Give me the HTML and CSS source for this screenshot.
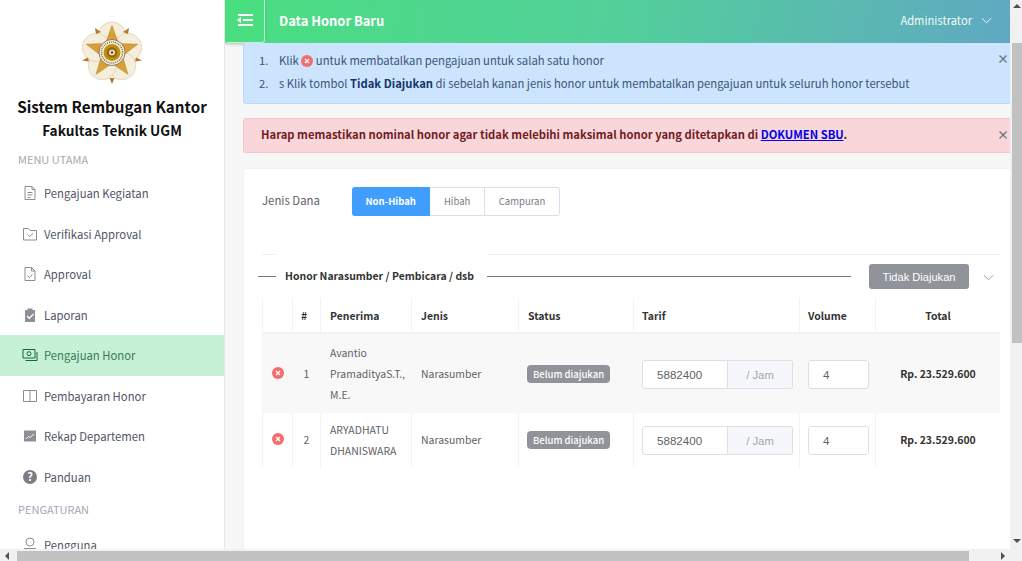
FILE: index.html
```html
<!DOCTYPE html>
<html lang="id">
<head>
    <meta charset="UTF-8">
    <meta name="viewport" content="width=device-width, initial-scale=1.0">
    <title>Data Honor Baru</title>
    <link rel="stylesheet" href="styles.css">
</head>
<body>

<div class="window">
    <div class="viewport">

        <aside class="sidebar">
            <svg class="logo" viewBox="0 0 60 64" width="60" height="64">
                <g fill="#f4eedb" stroke="#ddd2b2" stroke-width="0.8">
                    <circle cx="30" cy="15" r="14"/>
                    <circle cx="45.700" cy="26.400" r="14"/>
                    <circle cx="39.700" cy="44.800" r="14"/>
                    <circle cx="20.300" cy="44.800" r="14"/>
                    <circle cx="14.300" cy="26.400" r="14"/>
                </g>
                <g fill="#b9762a">
                    <path d="M47 7l-1 6-5-2z"/>
                    <path d="M13 7l1 6 5-2z"/>
                    <path d="M60 39.500l-6-3 -1 4z"/>
                    <path d="M0 39.500l6-3 1 4z"/>
                    <path d="M30 63l-2.500-6h5z"/>
                </g>
                <path d="M30 4.500l6.500 18.100 19.200 0.600-15.200 11.700 5.400 18.400-15.900-10.800-15.900 10.800 5.400-18.400-15.200-11.700 19.200-0.600z" fill="#d9a035" stroke="#b27c1e" stroke-width="0.500"/>
                <circle cx="30" cy="31.500" r="13" fill="#f6f1e4" stroke="#7b6136" stroke-width="0.800"/>
                <circle cx="30" cy="31.500" r="10.500" fill="none" stroke="#8a6a33" stroke-width="1.500" stroke-dasharray="1 1"/>
                <circle cx="30" cy="31.500" r="8.500" fill="#c2900f"/>
                <circle cx="30" cy="31.500" r="5.500" fill="#94700f"/>
                <circle cx="30" cy="31.500" r="2.800" fill="#f6f1e4"/>
                <circle cx="30" cy="31.500" r="1.200" fill="#6b2b2b"/>
            </svg>
            <div class="app-name">Sistem Rembugan Kantor</div>
            <div class="app-sub">Fakultas Teknik UGM</div>

            <div class="menu-label">MENU UTAMA</div>
            <a class="menu-item">
                <svg viewBox="0 0 16 16" width="16" height="16" class="ico"><path d="M3 1.500h7l3 3v10H3z M10 1.500v3h3 M5.500 7.500h5 M5.500 10h5 M5.500 12.500h3"/></svg>
                Pengajuan Kegiatan
            </a>
            <a class="menu-item">
                <svg viewBox="0 0 16 16" width="16" height="16" class="ico"><path d="M1.500 2.500h5l1.500 2h6.500v9.500h-13z M5.500 8.500l2 2 3.500-3"/></svg>
                Verifikasi Approval
            </a>
            <a class="menu-item">
                <svg viewBox="0 0 16 16" width="16" height="16" class="ico"><path d="M3 1.500h6.500l3.500 3.500v9.500h-10z M9.500 1.500v3.500h3.500 M5.500 9.500l2 2 3-3"/></svg>
                Approval
            </a>
            <a class="menu-item">
                <svg viewBox="0 0 16 16" width="16" height="16"><path d="M3 3h2.500V1.500h5V3H13v12H3z" fill="#8f8f96"/><path d="M5 9l2.300 2.300L11.500 7" fill="none" stroke="#fff" stroke-width="1.300"/></svg>
                Laporan
            </a>
            <a class="menu-item active">
                <svg viewBox="0 0 16 16" width="16" height="16" class="ico"><path d="M1 2.500h12v8.500H1z M15 5v8.500H3.500"/><circle cx="7" cy="6.700" r="2"/></svg>
                Pengajuan Honor
            </a>
            <a class="menu-item">
                <svg viewBox="0 0 16 16" width="16" height="16" class="ico"><path d="M1.500 2.500h13v11h-13z M8 2.500v11"/></svg>
                Pembayaran Honor
            </a>
            <a class="menu-item">
                <svg viewBox="0 0 16 16" width="16" height="16"><path d="M2 2.500h12v11H2z" fill="#8f8f96"/><path d="M4 11l2.500-2.500 1.500 1L12 6" fill="none" stroke="#fff" stroke-width="0.900"/></svg>
                Rekap Departemen
            </a>
            <a class="menu-item">
                <svg viewBox="0 0 16 16" width="16" height="16"><circle cx="8" cy="8" r="7" fill="#7c7c84"/><text x="8" y="11.500" class="ico-q">?</text></svg>
                Panduan
            </a>
            <div class="menu-label second">PENGATURAN</div>
            <a class="menu-item">
                <svg viewBox="0 0 16 16" width="16" height="16" class="ico"><circle cx="8" cy="5" r="4"/><path d="M2 11.500h12"/></svg>
                Pengguna
            </a>
        </aside>

        <main class="main">
            <header class="topbar">
                <button class="toggle">
                    <svg viewBox="0 0 16 12" width="16" height="12"><path d="M1 1h15M6 6h10M1 11h15" stroke="#fff" stroke-width="2.200" fill="none"/><path d="M0 6l4-3v6z" fill="#fff"/></svg>
                </button>
                <div class="page-title">Data Honor Baru</div>
                <div class="user">
                    Administrator
                    <svg viewBox="0 0 12 7" width="11" height="7"><path d="M1 1l5 5 5-5" stroke="#fff" fill="none"/></svg>
                </div>
            </header>

            <div class="content">
                <div class="alert alert-info">
                    <span class="close">×</span>
                    <ol>
                        <li>Klik <svg class="x-mini" viewBox="0 0 12 12" width="12" height="12"><circle cx="6" cy="6" r="6" fill="#f56c6c"/><path d="M4 4l4 4M8 4l-4 4" stroke="#fff" stroke-width="1.300"/></svg> untuk membatalkan pengajuan untuk salah satu honor</li>
                        <li>s Klik tombol <b>Tidak Diajukan</b> di sebelah kanan jenis honor untuk membatalkan pengajuan untuk seluruh honor tersebut</li>
                    </ol>
                </div>

                <div class="alert alert-danger">
                    <span class="close">×</span>
                    Harap memastikan nominal honor agar tidak melebihi maksimal honor yang ditetapkan di <a href="#">DOKUMEN SBU</a>.
                </div>

                <div class="card">
                    <div class="form-row">
                        <label>Jenis Dana</label>
                        <div class="radio-group">
                            <span class="radio on">Non-Hibah</span>
                            <span class="radio">Hibah</span>
                            <span class="radio">Campuran</span>
                        </div>
                    </div>

                    <div class="collapse-head">
                        <span class="rule first"></span>
                        <span class="collapse-title">Honor Narasumber / Pembicara / dsb</span>
                        <span class="rule"></span>
                        <button class="btn-grey">Tidak Diajukan</button>
                        <svg class="collapse-arrow" viewBox="0 0 12 7" width="11" height="7"><path d="M1 1l5 5 5-5" stroke="#909399" fill="none"/></svg>
                    </div>

                    <table class="honor">
                        <colgroup>
                            <col class="c-del"><col class="c-no"><col class="c-name"><col class="c-jenis">
                            <col class="c-status"><col class="c-tarif"><col class="c-vol"><col class="c-total">
                        </colgroup>
                        <thead>
                            <tr>
                                <th></th>
                                <th>#</th>
                                <th class="pad">Penerima</th>
                                <th class="pad">Jenis</th>
                                <th class="pad">Status</th>
                                <th>Tarif</th>
                                <th>Volume</th>
                                <th class="center">Total</th>
                            </tr>
                        </thead>
                        <tbody>
                            <tr class="striped tall">
                                <td class="center"><svg class="x-btn" viewBox="0 0 12 12" width="12" height="12"><circle cx="6" cy="6" r="6" fill="#f56c6c"/><path d="M4 4l4 4M8 4l-4 4" stroke="#fff" stroke-width="1.300"/></svg></td>
                                <td class="center">1</td>
                                <td class="pad">Avantio PramadityaS.T., M.E.</td>
                                <td class="pad">Narasumber</td>
                                <td class="pad"><span class="badge">Belum diajukan</span></td>
                                <td class="field">
                                    <div class="input-group"><span class="input">5882400</span><span class="append">/ Jam</span></div>
                                </td>
                                <td class="field"><span class="input vol">4</span></td>
                                <td class="center total">Rp. 23.529.600</td>
                            </tr>
                            <tr class="short">
                                <td class="center"><svg class="x-btn" viewBox="0 0 12 12" width="12" height="12"><circle cx="6" cy="6" r="6" fill="#f56c6c"/><path d="M4 4l4 4M8 4l-4 4" stroke="#fff" stroke-width="1.300"/></svg></td>
                                <td class="center">2</td>
                                <td class="pad">ARYADHATU DHANISWARA</td>
                                <td class="pad">Narasumber</td>
                                <td class="pad"><span class="badge">Belum diajukan</span></td>
                                <td class="field">
                                    <div class="input-group"><span class="input">5882400</span><span class="append">/ Jam</span></div>
                                </td>
                                <td class="field"><span class="input vol">4</span></td>
                                <td class="center total">Rp. 23.529.600</td>
                            </tr>
                        </tbody>
                    </table>
                </div>
            </div>
        </main>
    </div>

    <div class="vbar">
        <span class="arrow up"></span>
        <span class="vthumb"></span>
        <span class="arrow down"></span>
    </div>
    <div class="hbar">
        <span class="arrow left"></span>
        <span class="hthumb"></span>
        <span class="arrow right"></span>
    </div>
    <div class="corner"></div>
</div>

</body>
</html>
```

FILE: styles.css
```css
* {
    box-sizing: border-box;
}
html, body {
    margin: 0;
    padding: 0;
    height: 100%;
    overflow: hidden;
}
body {
    font-family: "Noto Sans CJK JP", "Noto Sans", sans-serif;
    font-size: 11.300px;
    color: #606266;
    background-color: #fff;
}
.window {
    display: grid;
    grid-template-columns: 1010px 12px;
    grid-template-rows: 549px 12px;
    height: 561px;
}
.viewport {
    display: flex;
    overflow: hidden;
}

/* sidebar */
.sidebar {
    width: 225px;
    flex-shrink: 0;
    padding-top: 21px;
    background-color: #fff;
    border-right: 1px solid #e8e8e8;
    overflow: hidden;
}
.logo {
    display: block;
    margin: 0 auto;
    filter: blur(0.4px);
}
.app-name {
    margin-top: 9px;
    font-size: 15.200px;
    line-height: 24px;
    font-weight: 700;
    color: #111;
    text-align: center;
}
.app-sub {
    font-size: 13.700px;
    line-height: 24px;
    font-weight: 700;
    color: #111;
    text-align: center;
}
.menu-label {
    margin-top: 9px;
    margin-bottom: 6px;
    padding-left: 18px;
    font-size: 11px;
    line-height: 16px;
    color: #a3a8b4;
}
.menu-label.second {
    margin-top: 4px;
    margin-bottom: 8px;
}
.menu-item {
    display: flex;
    align-items: center;
    gap: 6px;
    height: 40.500px;
    padding-left: 22px;
    color: #4f5666;
    font-size: 11.300px;
}
.menu-item.active {
    background-color: #c6f1d6;
    color: #3c7a57;
}
.ico {
    fill: none;
    stroke: #8b8d97;
    stroke-width: 1;
}
.active .ico {
    stroke: #17683a;
}
.ico-q {
    font-size: 11px;
    font-weight: 700;
    fill: #fff;
    text-anchor: middle;
}

/* main */
.main {
    flex: 1;
    min-width: 0;
    display: flex;
    flex-direction: column;
    background-color: #f7f7f7;
    overflow: hidden;
}
.topbar {
    flex-shrink: 0;
    height: 43px;
    display: flex;
    align-items: center;
    background: linear-gradient(100deg, #4ade80 0%, #52d09a 50%, #60a8c2 100%);
    box-shadow: 0 1px 4px rgba(0, 0, 0, 0.15);
    position: relative;
    color: #fff;
}
.toggle {
    width: 40px;
    height: 43px;
    display: flex;
    align-items: center;
    justify-content: center;
    padding: 0 0 2px;
    background-color: #4ade80;
    border: 0;
    border-right: 1px solid #c5eed6;
    border-bottom: 1px solid #c5eed6;
    border-radius: 0 0 3px 3px;
    box-shadow: 0 1px 3px rgba(0, 0, 0, 0.12);
}
.page-title {
    margin-left: 14px;
    padding-bottom: 3px;
    font-size: 12.900px;
    font-weight: 700;
}
.user {
    margin-left: auto;
    margin-right: 18px;
    padding-bottom: 3px;
    display: flex;
    align-items: center;
    gap: 9px;
    font-size: 11.200px;
    color: #f2fbf7;
}
.content {
    width: 800px;
    flex-shrink: 0;
    padding-left: 18px;
}
.alert {
    position: relative;
    font-size: 11.280px;
    border: 1px solid transparent;
    border-radius: 3px 0 0 3px;
}
.alert-info {
    height: 61px;
    background-color: #cce4fe;
    border-color: #b8daff;
    border-top: 0;
    color: #3b5478;
}
.alert-info ol {
    margin: 0;
    padding: 6px 0 0 27px;
    line-height: 23px;
}
.alert-info li {
    padding-left: 8px;
}
.alert-info b {
    color: #12356b;
}
.x-mini {
    vertical-align: -2px;
}
.alert-danger {
    height: 35px;
    margin-top: 14px;
    padding: 5px 0 0 17px;
    font-size: 11.240px;
    line-height: 21px;
    font-weight: 700;
    background-color: #f8d6da;
    border-color: #f5c6cb;
    color: #721c24;
}
.alert-danger a {
    color: #0000ee;
}
.close {
    position: absolute;
    top: 6px;
    left: 753px;
    font-size: 12px;
    line-height: 20px;
    font-weight: 700;
    color: #6f7680;
}

/* card */
.card {
    margin: 16px 0 0 1px;
    padding-left: 18px;
    height: 400px;
    background-color: #fff;
    box-shadow: 0 0 3px rgba(0, 0, 0, 0.06);
}
.form-row {
    display: flex;
    align-items: flex-start;
    padding-top: 18px;
    height: 85px;
}
.form-row label {
    width: 90px;
    line-height: 26px;
    font-size: 11.400px;
}
.radio-group {
    display: flex;
}
.radio {
    height: 29px;
    padding: 0 13.500px 1px;
    display: flex;
    align-items: center;
    font-size: 9.500px;
    color: #777c85;
    border: 1px solid #dcdfe6;
    border-left: 0;
}
.radio:last-child {
    padding: 0 14px 1px;
    border-radius: 0 3px 3px 0;
}
.radio.on {
    color: #fff;
    font-weight: 700;
    background-color: #409eff;
    border-color: #409eff;
    border-radius: 3px 0 0 3px;
}
.collapse-head {
    width: 738px;
    height: 44px;
    display: flex;
    align-items: center;
    border-top: 1px solid #ebeef5;
}
.rule {
    flex: 1;
    height: 1px;
    background-color: #777;
}
.rule.first {
    flex: none;
    width: 18px;
    margin-left: -4px;
}
.collapse-title {
    align-self: stretch;
    margin-top: -1px;
    padding: 0 13px 2px 9px;
    display: flex;
    align-items: center;
    font-size: 10.450px;
    font-weight: 700;
    color: #333;
    background-color: #fff;
}
.btn-grey {
    width: 100px;
    height: 25px;
    margin-left: 18px;
    padding: 0;
    font-family: "Liberation Sans", Arial, sans-serif;
    font-size: 11.100px;
    color: #fff;
    background-color: #909399;
    border: 0;
    border-radius: 3px;
}
.collapse-arrow {
    margin: 1px 6px 0 14px;
}

/* table */
.honor {
    width: 738px;
    table-layout: fixed;
    border-collapse: separate;
    border-spacing: 0;
}
.c-del { width: 31px; }
.c-no { width: 28px; }
.c-name { width: 91px; }
.c-jenis { width: 107px; }
.c-status { width: 115px; }
.c-tarif { width: 166px; }
.c-vol { width: 76px; }
.c-total { width: 124px; }
.honor th, .honor td {
    padding: 0 8px;
    border-right: 1px solid #f3f3f3;
    font-size: 10.450px;
    line-height: 21px;
    text-align: left;
}
.honor th.pad, .honor td.pad {
    padding-left: 9px;
}
.honor th:first-child, .honor td:first-child {
    border-left: 1px solid #f3f3f3;
}
.honor th:last-child, .honor td:last-child {
    border-right: 0;
}
.honor th {
    height: 36px;
    color: #333;
    font-weight: 700;
    border-bottom: 2px solid #f2f2f2;
}
.honor .center {
    text-align: center;
}
.honor .tall {
    height: 79px;
}
.honor .short {
    height: 55px;
}
.honor .tall .field {
    padding-top: 2px;
}
.honor .short td {
    padding-bottom: 2px;
}
.honor .short .field {
    padding-bottom: 0;
}
.striped {
    background-color: #f8f8f8;
}
.striped td {
    border-color: #f8f8f8;
}
.honor td:first-child {
    padding-left: 0;
    padding-right: 0;
}
.x-btn {
    display: block;
    margin: 0 auto 2px;
}
.badge {
    display: inline-block;
    height: 18px;
    margin-left: -1px;
    padding: 0 6px;
    font-size: 9.500px;
    line-height: 18px;
    font-weight: 500;
    white-space: nowrap;
    color: #fff;
    background-color: #909399;
    border-radius: 4px;
}
.input-group {
    display: flex;
    width: 151px;
}
.input {
    display: block;
    width: 86px;
    height: 29px;
    padding-left: 14px;
    font-family: "Liberation Sans", Arial, sans-serif;
    font-size: 11.600px;
    line-height: 27px;
    color: #606266;
    background-color: #fff;
    border: 1px solid #dcdfe6;
    border-radius: 3px 0 0 3px;
}
.input.vol {
    width: 61px;
    border-radius: 3px;
}
.append {
    flex: 1;
    height: 29px;
    text-align: center;
    font-family: "Liberation Sans", Arial, sans-serif;
    font-size: 11.300px;
    line-height: 29px;
    color: #a4a7ad;
    background-color: #f5f7fa;
    border: 1px solid #dcdfe6;
    border-left: 0;
    border-radius: 0 3px 3px 0;
}
.honor .total {
    font-weight: 700;
    color: #333;
}

/* scrollbars */
.vbar, .hbar, .corner {
    background-color: #f1f1f1;
}
.vbar {
    display: flex;
    flex-direction: column;
    align-items: center;
    padding: 4px 0 6px 1px;
}
.vthumb {
    width: 10px;
    height: 300px;
    margin-top: 35px;
    background-color: #c1c1c1;
}
.hbar {
    display: flex;
    align-items: center;
    padding: 2px 5px 0 5px;
}
.hthumb {
    width: 952px;
    height: 10px;
    margin-left: 8px;
    background-color: #c1c1c1;
}
.arrow {
    width: 0;
    height: 0;
    border: 4px solid transparent;
}
.arrow.up {
    border-top: 0;
    border-bottom-color: #505050;
}
.arrow.down {
    margin-top: auto;
    border-bottom: 0;
    border-top-color: #505050;
}
.arrow.left {
    border-left: 0;
    border-right-color: #505050;
}
.arrow.right {
    margin-left: auto;
    border-right: 0;
    border-left-color: #505050;
}
```
